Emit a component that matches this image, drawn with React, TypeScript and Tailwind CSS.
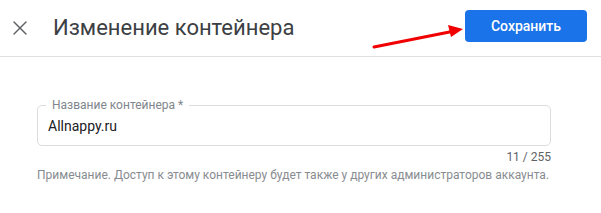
import { X } from 'lucide-react'

export default function App() {
  return (
    <div className="relative w-[601px] h-[213px] bg-white font-['Roboto',sans-serif] overflow-hidden">
      <header className="flex h-[57px] items-center border-b border-[#e0e0e0] pl-[8px] pr-[14px]">
        <button className="-mt-[1px] flex h-[24px] w-[24px] items-center justify-center text-[#5f6368]">
          <X className="h-[24px] w-[24px]" strokeWidth={1.5} />
        </button>
        <h1 className="ml-[21px] text-[22px] leading-none text-[#3c4043]">Изменение контейнера</h1>
        <button className="ml-auto -mt-[4px] h-[32px] w-[122px] rounded-[4px] bg-[#1a73e8] text-[14px] font-medium text-white">
          Сохранить
        </button>
      </header>

      {/* red annotation arrow */}
      <svg className="absolute left-[370px] top-[22px]" width="100" height="30" viewBox="0 0 100 30">
        <line x1="4" y1="25" x2="82" y2="9.5" stroke="#f00000" strokeWidth="3" strokeLinecap="round" />
        <polygon points="93,7 78,3 81,15" fill="#f00000" />
      </svg>

      <main className="pl-[37px] pr-[50px] pt-[48px]">
        <div className="relative h-[41px] rounded-[5px] border border-[#dadce0]">
          <span className="absolute -top-[8px] left-[8px] bg-white px-[6px] text-[12px] leading-[14px] text-[#80868b]">
            Название контейнера *
          </span>
          <div className="flex h-full items-center pl-[10px] pt-[2px] text-[14px] text-[#202124]">Allnappy.ru</div>
        </div>
        <div className="mt-[4px] text-right text-[12px] leading-[14px] text-[#5f6368]">11 / 255</div>
        <p className="mt-[4px] text-[12px] leading-[14px] text-[#888c90]">
          Примечание. Доступ к этому контейнеру будет также у других администраторов аккаунта.
        </p>
      </main>
    </div>
  )
}
